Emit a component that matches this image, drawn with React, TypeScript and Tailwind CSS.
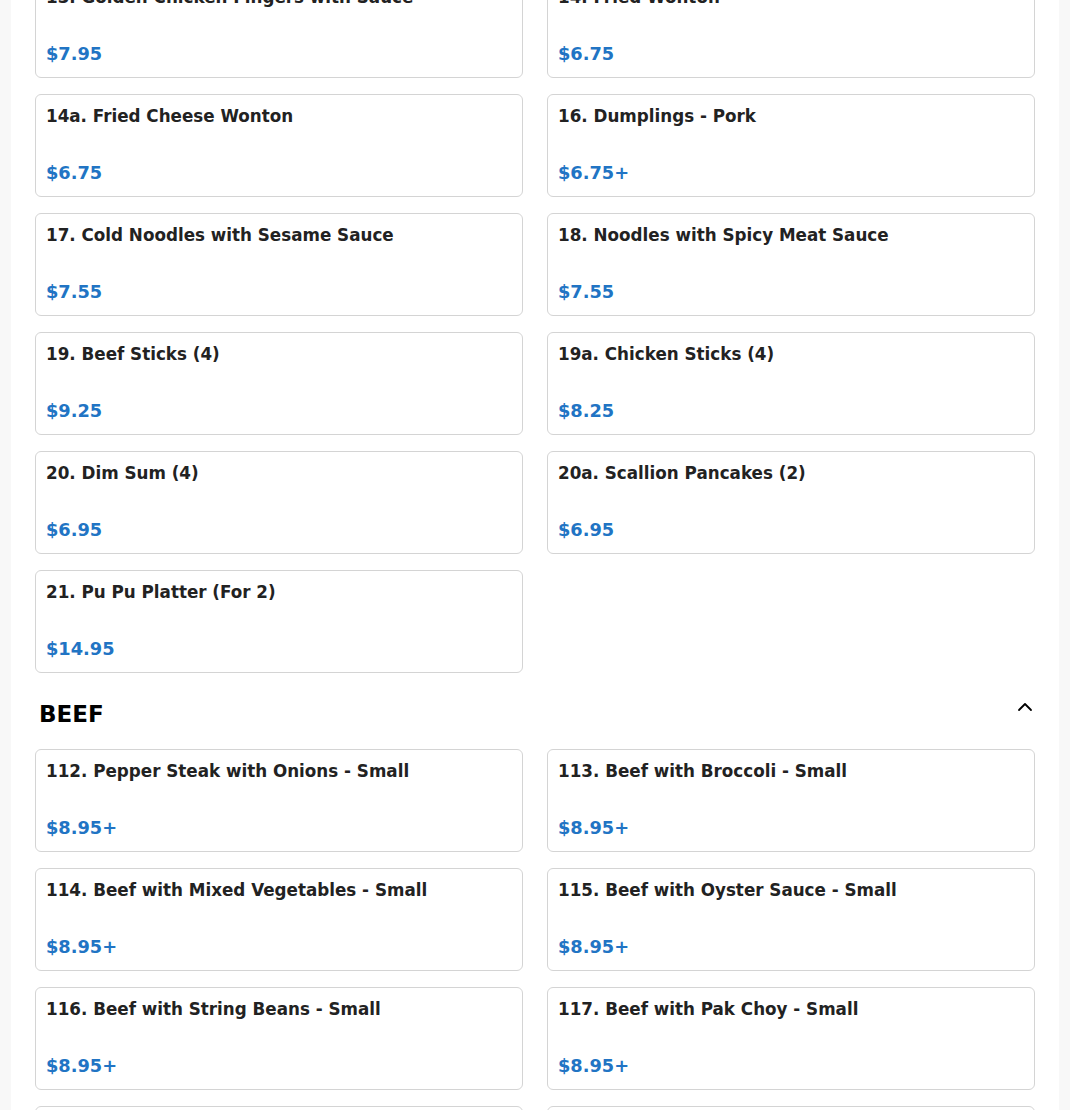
import { ChevronUp } from 'lucide-react';

interface MenuItem {
  name: string;
  price: string;
}

interface Section {
  title?: string;
  items: MenuItem[];
}

const sections: Section[] = [
  {
    items: [
      { name: '13. Golden Chicken Fingers with Sauce', price: '$7.95' },
      { name: '14. Fried Wonton', price: '$6.75' },
      { name: '14a. Fried Cheese Wonton', price: '$6.75' },
      { name: '16. Dumplings - Pork', price: '$6.75+' },
      { name: '17. Cold Noodles with Sesame Sauce', price: '$7.55' },
      { name: '18. Noodles with Spicy Meat Sauce', price: '$7.55' },
      { name: '19. Beef Sticks (4)', price: '$9.25' },
      { name: '19a. Chicken Sticks (4)', price: '$8.25' },
      { name: '20. Dim Sum (4)', price: '$6.95' },
      { name: '20a. Scallion Pancakes (2)', price: '$6.95' },
      { name: '21. Pu Pu Platter (For 2)', price: '$14.95' },
    ],
  },
  {
    title: 'BEEF',
    items: [
      { name: '112. Pepper Steak with Onions - Small', price: '$8.95+' },
      { name: '113. Beef with Broccoli - Small', price: '$8.95+' },
      { name: '114. Beef with Mixed Vegetables - Small', price: '$8.95+' },
      { name: '115. Beef with Oyster Sauce - Small', price: '$8.95+' },
      { name: '116. Beef with String Beans - Small', price: '$8.95+' },
      { name: '117. Beef with Pak Choy - Small', price: '$8.95+' },
      { name: '118. Beef with Garlic Sauce - Small', price: '$8.95+' },
      { name: '119. Hunan Beef - Small', price: '$8.95+' },
    ],
  },
];

const ItemCard = ({ item }: { item: MenuItem }) => (
  <div className="h-[103px] flex flex-col justify-between bg-white border border-[#d4d4d4] rounded-md px-[10px] pt-[10px] pb-[12px]">
    <div className="text-[16.75px] leading-[22px] font-bold text-[#222222]">{item.name}</div>
    <div className="text-[17.8px] leading-[22px] font-bold text-[#2174c4]">{item.price}</div>
  </div>
);

export default function App() {
  return (
    <div className="h-[1110px] overflow-hidden bg-[#f8f8f8] px-[11px]" style={{ fontFamily: '"DejaVu Sans", sans-serif' }}>
      <div className="bg-white px-6 min-h-full">
        <div className="-mt-[25px]">
          {sections.map((section, i) => (
            <div key={i}>
              {section.title && (
                <div className="flex justify-between items-start pl-1 pt-[25px] pb-[19px]">
                  <h2 className="text-[23px] leading-[32px] font-bold text-black">{section.title}</h2>
                  <ChevronUp className="w-6 h-6 -mt-[3px] -mr-[2px] text-black" strokeWidth={1.8} />
                </div>
              )}
              <div className="grid grid-cols-2 gap-x-6 gap-y-4">
                {section.items.map((item) => (
                  <ItemCard key={item.name} item={item} />
                ))}
              </div>
            </div>
          ))}
        </div>
      </div>
    </div>
  );
}
